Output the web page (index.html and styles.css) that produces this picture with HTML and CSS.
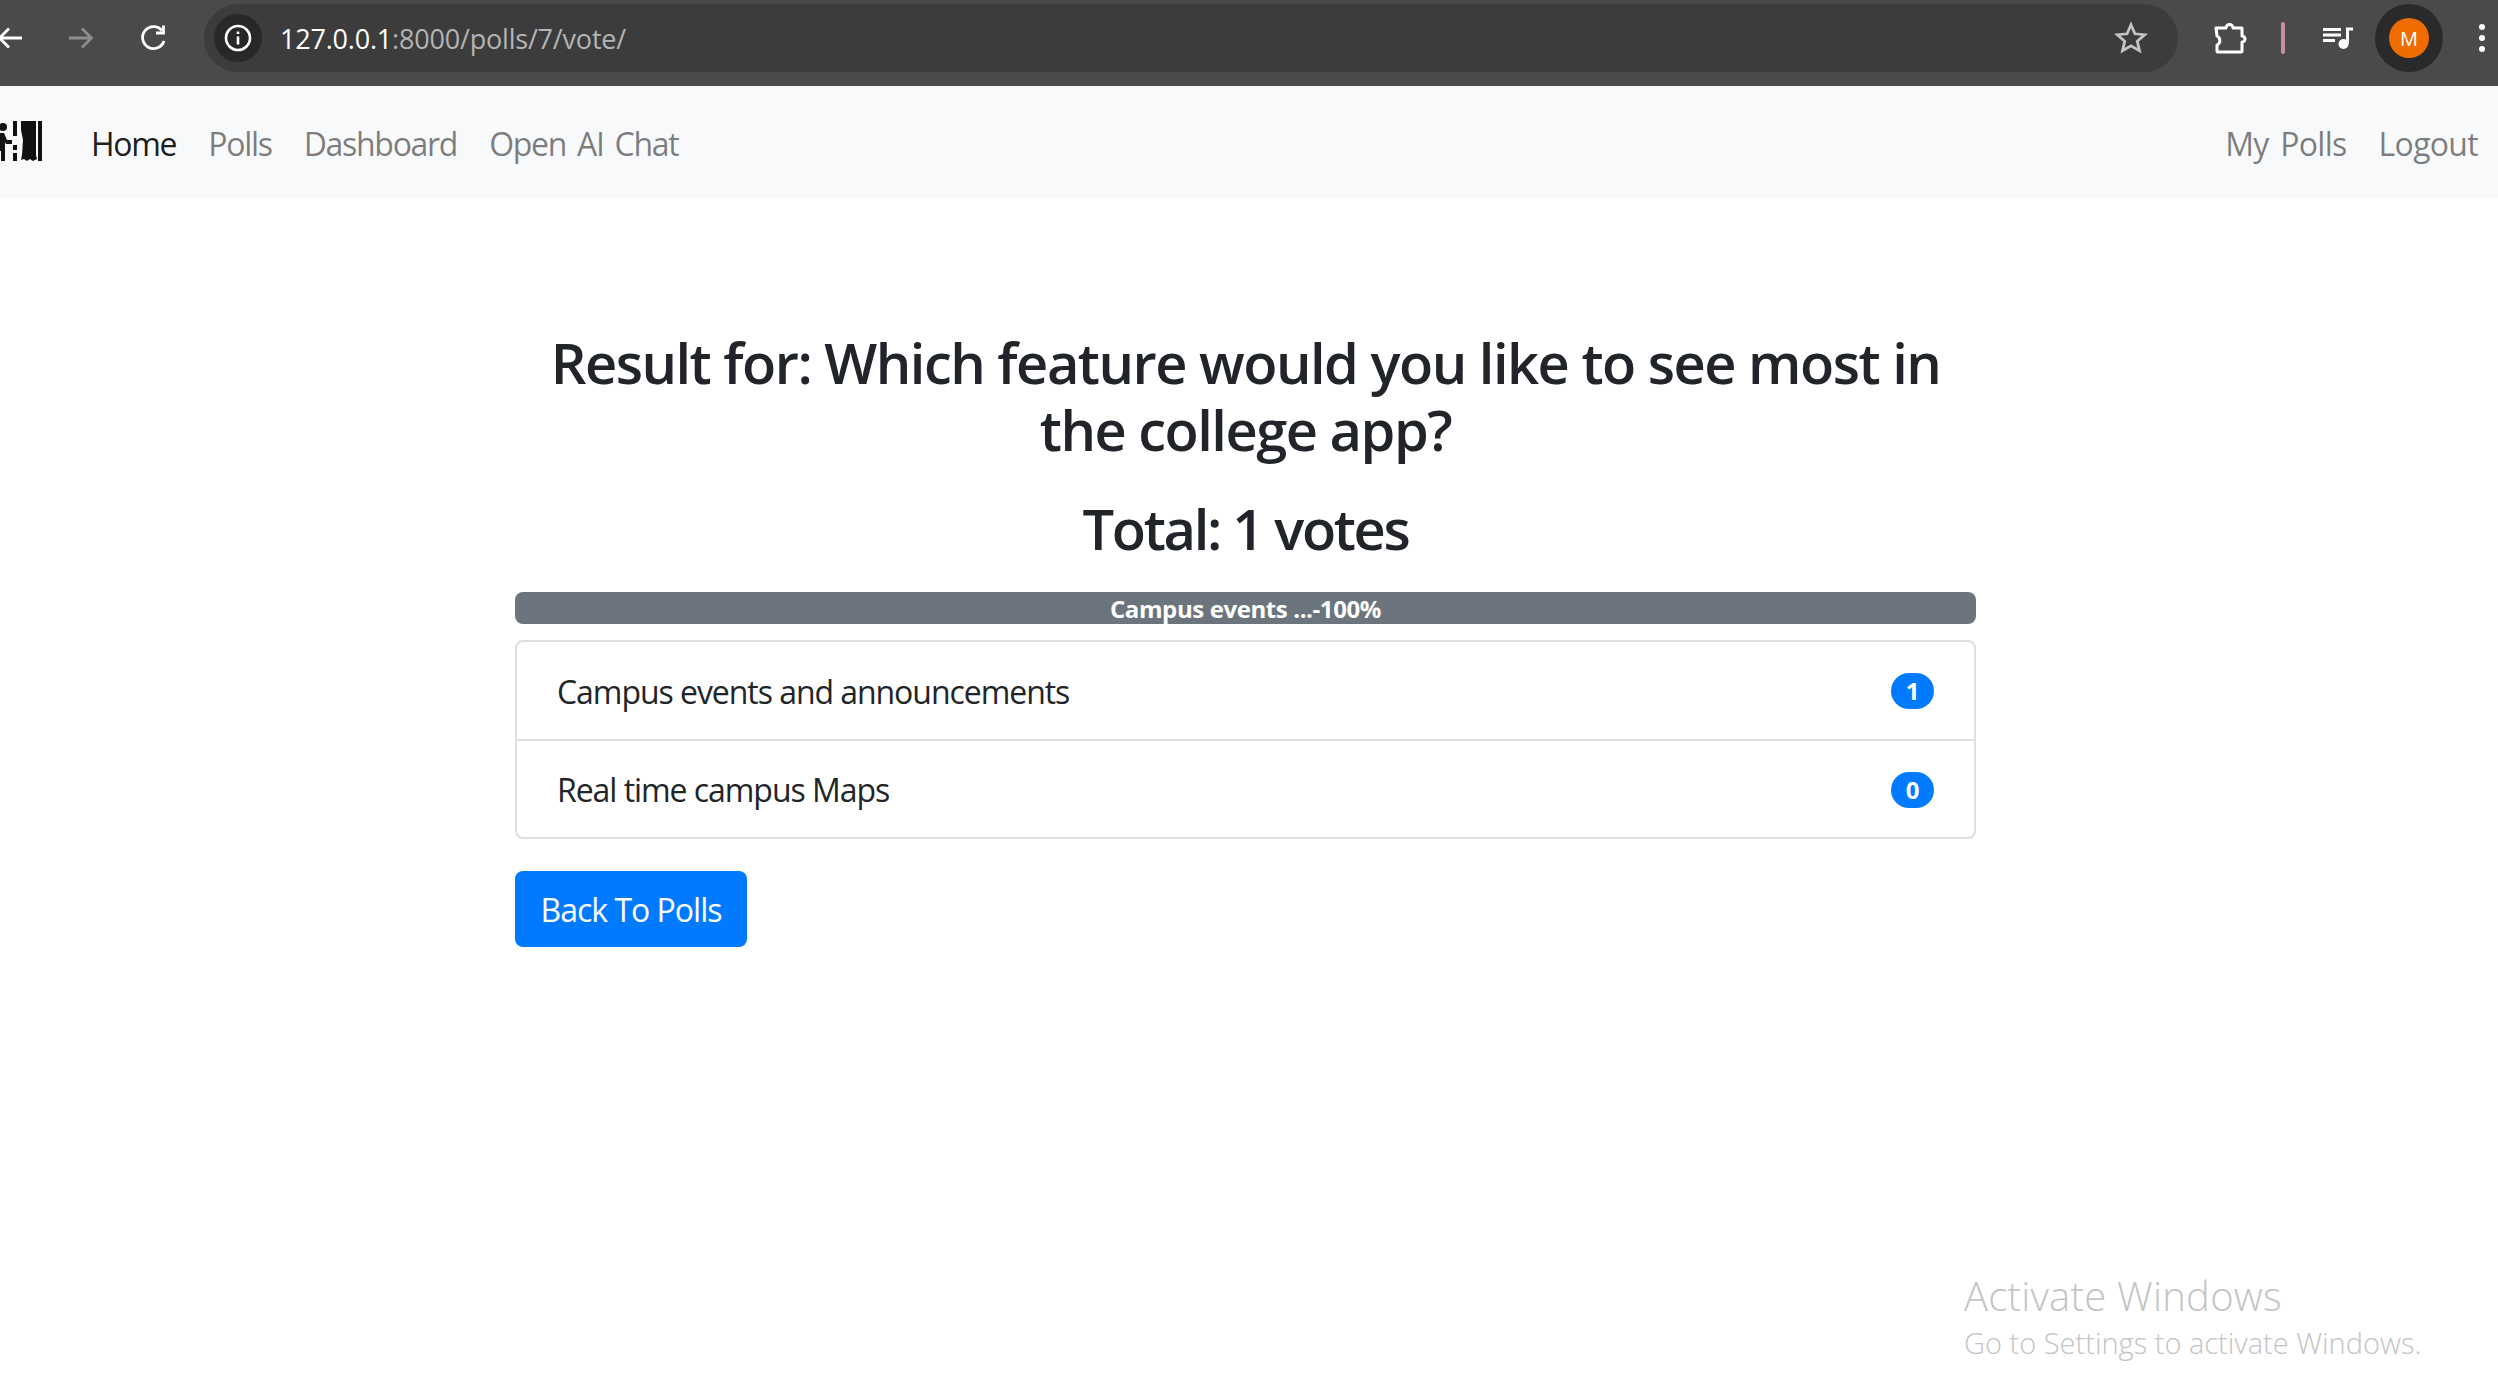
FILE: index.html
```html
<!DOCTYPE html>
<html lang="en">
<head>
  <meta charset="UTF-8">
  <title>Poll Result</title>
  <link rel="stylesheet" href="styles.css">
</head>
<body>
  <!-- Browser toolbar -->
  <div class="browser-bar">
    <svg class="tool tool-back" viewBox="0 0 28 28"><path d="M26 14H4M13 4.500L3.500 14l9.500 9.500" /></svg>
    <svg class="tool tool-forward" viewBox="0 0 28 28"><path d="M2 14h22M15 4.500l9.500 9.500-9.500 9.500" /></svg>
    <svg class="tool tool-reload" viewBox="0 0 28 28"><path d="M25 17a11 11 0 1 1-2-10.500M24.500 1.500v7.500H17" /></svg>
    <div class="address">
      <span class="site-info">
        <svg class="info-icon" viewBox="0 0 30 30">
          <circle cx="15" cy="15" r="12" />
          <path d="M15 13.500v8M15 8.500v2.500" />
        </svg>
      </span>
      <span class="url"><span class="host">127.0.0.1</span>:8000/polls/7/vote/</span>
      <svg class="star" viewBox="0 0 32 32"><path d="M16 3.500l3.700 8.500 9.200.9-7 6.100 2.100 9-8-4.700-8 4.700 2.100-9-7-6.100 9.200-.9z" /></svg>
    </div>
    <svg class="tool tool-puzzle" viewBox="0 0 34 34"><path d="M3 7h10a3.500 3.500 0 0 1 7 0h9v8a2.500 2.500 0 0 1 0 6v9a1 1 0 0 1-1 1H5a1 1 0 0 1-1-1v-6a5 5 0 0 0 0-9z" /></svg>
    <span class="pink-line"></span>
    <svg class="tool-music" viewBox="0 0 30 22">
      <path d="M0 2.500h18M0 8h18M0 13.500h12" />
      <path d="M24.500 17V2h5.500" />
      <circle cx="20.500" cy="17" r="5" />
    </svg>
    <span class="profile"><span class="avatar">M</span></span>
    <span class="menu-dots"><i></i><i></i><i></i></span>
  </div>

  <!-- Site navbar -->
  <nav class="navbar">
    <svg class="brand" viewBox="0 0 44 42">
      <circle cx="3" cy="6" r="4" />
      <path d="M-5 12h9l3 7h5v4H6l-1-2v19H1V30h-2v10h-5z" />
      <path d="M13 0h4v15h-4zM13 24h4v5h-4zM13 32h4v8h-4z" />
      <path d="M21 0h15v34l1 4-4 2-3-2-3 2-3-2-3 1 1-5 1-15-2-10z" />
      <path d="M38 0h4v40h-4z" />
    </svg>
    <a class="nav-link active" href="#">Home</a>
    <a class="nav-link" href="#">Polls</a>
    <a class="nav-link" href="#">Dashboard</a>
    <a class="nav-link" href="#">Open AI Chat</a>
    <span class="nav-spacer"></span>
    <a class="nav-link nav-link-right" href="#">My Polls</a>
    <a class="nav-link nav-link-right" href="#">Logout</a>
  </nav>

  <main class="content">
    <h3 class="title">Result for: Which feature would you like to see most in the college app?</h3>
    <h3 class="total">Total: 1 votes</h3>

    <div class="progress"><div class="progress-bar">Campus events ...-100%</div></div>

    <ul class="list-group">
      <li class="list-item">Campus events and announcements <span class="badge">1</span></li>
      <li class="list-item">Real time campus Maps <span class="badge">0</span></li>
    </ul>

    <a class="btn" href="#">Back To Polls</a>
  </main>

  <div class="watermark">
    <div class="wm-title">Activate Windows</div>
    <div class="wm-sub">Go to Settings to activate Windows.</div>
  </div>
</body>
</html>
```

FILE: styles.css
```css
* {
  box-sizing: border-box;
  margin: 0;
  padding: 0;
}

html, body {
  height: 100%;
}

body {
  font-family: "Open Sans", "Noto Sans", sans-serif;
  background: #fff;
  color: #212529;
  overflow: hidden;
  position: relative;
}

a {
  text-decoration: none;
}

/* Browser toolbar */
.browser-bar {
  display: flex;
  align-items: center;
  height: 86px;
  padding-bottom: 10px;
  background: #4a4a4a;
}

.tool {
  width: 28px;
  height: 28px;
  flex: none;
  fill: none;
  stroke: #fff;
  stroke-width: 2.800;
}

.tool-back {
  margin-left: -4px;
}

.tool-forward {
  margin-left: 43px;
  stroke: #8d8d8d;
}

.tool-reload {
  margin-left: 44px;
}

.address {
  display: flex;
  align-items: center;
  width: 1974px;
  height: 68px;
  margin-left: 37px;
  padding: 0 14px 0 10px;
  background: #3c3c3c;
  border-radius: 34px;
}

.site-info {
  display: flex;
  align-items: center;
  justify-content: center;
  width: 48px;
  height: 48px;
  border-radius: 50%;
  background: #282828;
}

.info-icon {
  width: 30px;
  height: 30px;
  fill: none;
  stroke: #fff;
  stroke-width: 2.600;
}

.url {
  flex: 1;
  margin-left: 18px;
  font-size: 27px;
  letter-spacing: -.2px;
  color: #b4b4b4;
}

.host {
  color: #fff;
}

.star {
  width: 34px;
  height: 34px;
  margin-right: 16px;
  fill: none;
  stroke: #c4c4c4;
  stroke-width: 2.600;
}

.tool-puzzle {
  width: 34px;
  height: 34px;
  margin-left: 35px;
  stroke-width: 3;
  stroke-linejoin: round;
}

.pink-line {
  width: 4px;
  height: 32px;
  margin-left: 34px;
  border-radius: 2px;
  background: #c98fa5;
}

.tool-music {
  width: 30px;
  height: 22px;
  margin-left: 38px;
  fill: #fff;
  stroke: none;
}

.tool-music path {
  fill: none;
  stroke: #fff;
  stroke-width: 3;
}

.profile {
  display: flex;
  align-items: center;
  justify-content: center;
  width: 68px;
  height: 68px;
  margin-left: 22px;
  border-radius: 50%;
  background: #2a2a2a;
}

.avatar {
  display: flex;
  align-items: center;
  justify-content: center;
  width: 40px;
  height: 40px;
  border-radius: 50%;
  background: #ee6c00;
  color: #fff;
  font-size: 20px;
}

.menu-dots {
  display: flex;
  flex-direction: column;
  gap: 5px;
  margin-left: 36px;
}

.menu-dots i {
  display: block;
  width: 6px;
  height: 6px;
  border-radius: 50%;
  background: #fff;
}

/* Navbar */
.navbar {
  display: flex;
  align-items: center;
  height: 112px;
  background: #f8f9fa;
}

.brand {
  width: 44px;
  height: 42px;
  margin-right: 47px;
  fill: #111;
}

.nav-link {
  margin-right: 32px;
  padding-top: 2px;
  font-size: 32px;
  letter-spacing: -1.300px;
  word-spacing: 4px;
  color: rgba(0, 0, 0, 0.5);
}

.nav-link-right {
  letter-spacing: -.7px;
}

.nav-link:last-child {
  margin-right: 20px;
}

.nav-link.active {
  color: rgba(0, 0, 0, 0.9);
}

.nav-spacer {
  flex: 1;
}

/* Poll result */
.content {
  width: 1461px;
  margin-left: 515px;
  padding-top: 131px;
}

.title, .total {
  font-size: 56px;
  font-weight: 600;
  line-height: 67px;
  text-align: center;
}

.title {
  margin-bottom: 32px;
  letter-spacing: -1.500px;
}

.total {
  margin-bottom: 30px;
  letter-spacing: -2.300px;
}

.progress {
  height: 32px;
  margin-bottom: 16px;
  border-radius: 8px;
  background: #e9ecef;
  overflow: hidden;
}

.progress-bar {
  width: 100%;
  height: 100%;
  background: #6c757d;
  color: #fff;
  font-size: 24px;
  font-weight: 700;
  line-height: 34px;
  text-align: center;
  letter-spacing: -.4px;
}

.list-group {
  list-style: none;
  border: 2px solid #dfdfdf;
  border-radius: 8px;
  margin-bottom: 32px;
}

.list-item {
  display: flex;
  align-items: center;
  justify-content: space-between;
  height: 97px;
  padding: 1px 40px 0;
  font-size: 32px;
  letter-spacing: -1.050px;
}

.list-item + .list-item {
  border-top: 2px solid #dfdfdf;
  height: 98px;
}

.badge {
  display: inline-block;
  width: 43px;
  height: 36px;
  border-radius: 18px;
  background: #007bff;
  color: #fff;
  font-size: 24px;
  font-weight: 700;
  line-height: 36px;
  text-align: center;
  letter-spacing: 0;
}

.btn {
  display: inline-block;
  height: 76px;
  width: 232px;
  border-radius: 8px;
  background: #007bff;
  color: #fff;
  font-size: 32px;
  line-height: 77px;
  text-align: center;
  letter-spacing: -1px;
}

/* Windows watermark */
.watermark {
  position: absolute;
  left: 1964px;
  top: 1270px;
  color: #c4c4c4;
  font-weight: 300;
}

.wm-title {
  font-size: 40px;
  line-height: 52px;
  letter-spacing: .25px;
}

.wm-sub {
  font-size: 29px;
  line-height: 42px;
}
```
